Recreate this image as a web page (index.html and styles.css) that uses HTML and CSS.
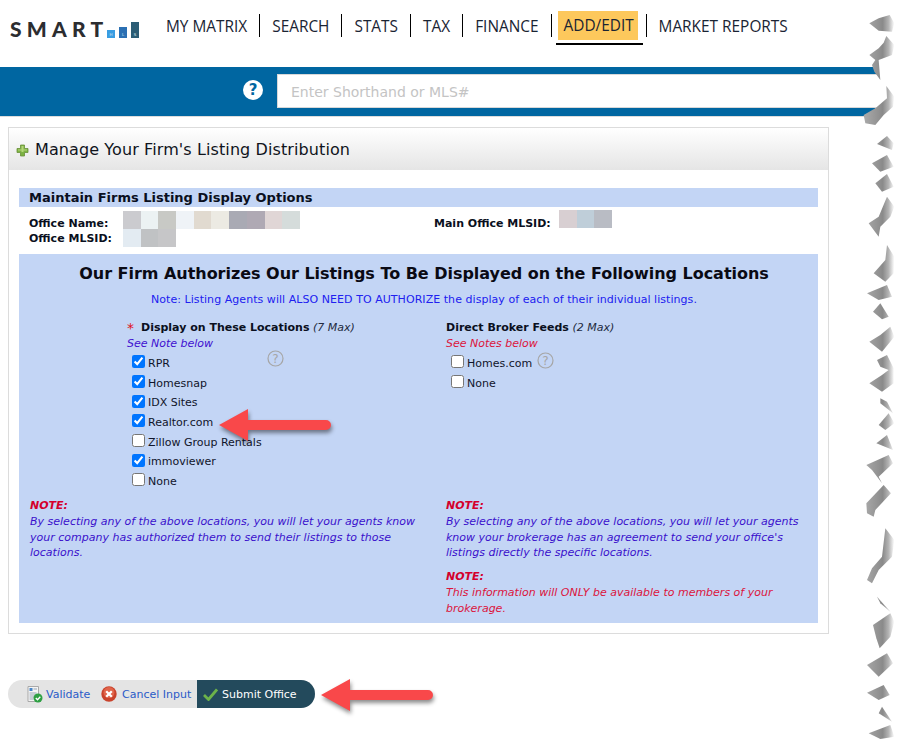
FILE: index.html
```html
<!DOCTYPE html>
<html lang="en">
<head>
<meta charset="utf-8">
<title>Manage Your Firm's Listing Distribution</title>
<link rel="stylesheet" href="styles.css">
</head>
<body>
<header class="topbar">
  <div class="logo">
    <span class="logo-word">SMART</span>
    <span class="logo-bars">
      <span class="bar bar-h">H</span>
      <span class="bar bar-l">L</span>
      <span class="bar bar-s">S</span>
    </span>
  </div>
  <nav class="nav">
    <a class="nav-item">MY MATRIX</a>
    <a class="nav-item">SEARCH</a>
    <a class="nav-item">STATS</a>
    <a class="nav-item">TAX</a>
    <a class="nav-item">FINANCE</a>
    <a class="nav-item nav-active"><span class="nav-hl">ADD/EDIT</span></a>
    <a class="nav-item nav-last">MARKET REPORTS</a>
  </nav>
</header>

<div class="searchband">
  <svg class="help-white" width="20" height="20" viewBox="0 0 20 20"><circle cx="10" cy="10" r="10" fill="#fff"/><text x="10" y="15.2" text-anchor="middle" class="help-white-q">?</text></svg>
  <div class="searchbox">Enter Shorthand or MLS#</div>
</div>

<main class="panel">
  <div class="panel-head">
    <svg class="plus" width="13" height="13" viewBox="0 0 13 13"><path d="M4.5 1h4v3.5H12v4H8.500V12h-4V8.500H1v-4h3.500z" fill="#7cb342" stroke="#6a8f3a" stroke-width=".8"/><path d="M5.500 2h2v3.500H11v1H7.500V8h-2V6.500H2v-1h3.500z" fill="#b5d67a"/></svg>
    <h1 class="panel-title">Manage Your Firm's Listing Distribution</h1>
  </div>
  <div class="panel-body">
    <h2 class="subhead">Maintain Firms Listing Display Options</h2>
    <div class="office">
      <div class="office-col">
        <div class="office-row"><b class="office-label label-low">Office Name:</b>
          <span class="blur"><i class="px a1"></i><i class="px a2"></i><i class="px a3"></i><i class="px a4"></i><i class="px a5"></i><i class="px a6"></i><i class="px a7"></i><i class="px a8"></i><i class="px a9"></i><i class="px a10"></i></span></div>
        <div class="office-row"><b class="office-label">Office MLSID:</b>
          <span class="blur"><i class="px b1"></i><i class="px b2"></i><i class="px b3"></i></span></div>
      </div>
      <div class="office-col2">
        <div class="office-row"><b class="office-label2">Main Office MLSID:</b>
          <span class="blur"><i class="px c1"></i><i class="px c2"></i><i class="px c3"></i></span></div>
      </div>
    </div>

    <section class="bluebox">
      <h2 class="auth-title">Our Firm Authorizes Our Listings To Be Displayed on the Following Locations</h2>
      <p class="auth-note">Note: Listing Agents will ALSO NEED TO AUTHORIZE the display of each of their individual listings.</p>
      <div class="cols">
        <div class="col-left">
          <div class="col-head"><span class="star">*</span><b>Display on These Locations</b> <em>(7 Max)</em></div>
          <div class="see see-blue">See Note below</div>
          <label class="check"><input type="checkbox" checked>RPR<svg class="help help-a" width="17" height="17" viewBox="0 0 17 17"><circle cx="8.500" cy="8.500" r="7.500" fill="none" stroke="#a6a6a6" stroke-width="1.200"/><text x="8.500" y="12.500" text-anchor="middle" class="help-q">?</text></svg></label>
          <label class="check"><input type="checkbox" checked>Homesnap</label>
          <label class="check"><input type="checkbox" checked>IDX Sites</label>
          <label class="check"><input type="checkbox" checked>Realtor.com</label>
          <label class="check"><input type="checkbox">Zillow Group Rentals</label>
          <label class="check"><input type="checkbox" checked>immoviewer</label>
          <label class="check"><input type="checkbox">None</label>
        </div>
        <div class="col-right">
          <div class="col-head"><b>Direct Broker Feeds</b> <em>(2 Max)</em></div>
          <div class="see see-red">See Notes below</div>
          <label class="check"><input type="checkbox">Homes.com<svg class="help help-b" width="17" height="17" viewBox="0 0 17 17"><circle cx="8.500" cy="8.500" r="7.500" fill="none" stroke="#a6a6a6" stroke-width="1.200"/><text x="8.500" y="12.500" text-anchor="middle" class="help-q">?</text></svg></label>
          <label class="check"><input type="checkbox">None</label>
        </div>
      </div>
      <div class="notes">
        <div class="note-left">
          <div class="note-label">NOTE:</div>
          <p class="note-text">By selecting any of the above locations, you will let your agents know your company has authorized them to send their listings to those locations.</p>
        </div>
        <div class="note-right">
          <div class="note-label">NOTE:</div>
          <p class="note-text">By selecting any of the above locations, you will let your agents know your brokerage has an agreement to send your office's listings directly the specific locations.</p>
          <div class="note-label note-gap">NOTE:</div>
          <p class="note-text note-red">This information will ONLY be available to members of your brokerage.</p>
        </div>
      </div>
    </section>
  </div>
</main>

<div class="actions">
  <a class="act act-validate">
    <svg width="16" height="17" viewBox="0 0 16 17"><path d="M1 .5h10.500v15H1z" fill="#f4f4f4" stroke="#a9a9a9"/><rect x="2.500" y="2" width="3" height="3" fill="#4a86c8"/><path d="M6.500 3h3.500M2.500 7h7M2.500 9h6M2.500 11h5M2.500 13h4" stroke="#9aa7b5"/><circle cx="11" cy="12" r="4.500" fill="#2ea043"/><path d="M8.800 12l1.700 1.700 2.800-3" fill="none" stroke="#fff" stroke-width="1.300"/></svg>
    <span>Validate</span>
  </a>
  <a class="act act-cancel">
    <svg width="16" height="16" viewBox="0 0 16 16"><circle cx="8" cy="8" r="7.700" fill="#c9432c"/><circle cx="8" cy="6.500" r="5.500" fill="#e0644a"/><path d="M5.200 5.200l5.600 5.600M10.800 5.200l-5.600 5.600" stroke="#fff" stroke-width="2.300"/></svg>
    <span>Cancel Input</span>
  </a>
  <a class="act-submit">
    <svg width="15" height="13" viewBox="0 0 15 13"><path d="M1 7l4.500 4.500L14 1.500" fill="none" stroke="#6cb34a" stroke-width="2.800"/></svg>
    <span>Submit Office</span>
  </a>
</div>

<svg class="arrow arrow-one" width="122" height="44" viewBox="0 0 122 44"><path d="M3 19L32 3v11h78a5 5 0 0 1 0 10H32v11z" fill="#f9484a"/></svg>
<svg class="arrow arrow-two" width="122" height="44" viewBox="0 0 122 44"><path d="M3 19L32 3v11h78a5 5 0 0 1 0 10H32v11z" fill="#f9484a"/></svg>

<svg class="torn" width="60" height="743" viewBox="0 0 180 2229" aria-hidden="true">
  <defs>
    <linearGradient id="shade" gradientUnits="userSpaceOnUse" x1="85" x2="172" y1="0" y2="0">
      <stop offset="0" stop-color="#a8a8a8"/>
      <stop offset=".6" stop-color="#8a8a8a"/>
      <stop offset=".8" stop-color="#b4b4b4"/>
      <stop offset="1" stop-color="#ffffff"/>
    </linearGradient>
    <filter id="soft" x="-20%" y="-20%" width="140%" height="140%"><feGaussianBlur stdDeviation="1.500"/></filter>
  </defs>
  <path d="M105 190L125 235 150 258 165 290 115 325 85 372H180V190z" fill="#fff"/>
  <g fill="url(#shade)" filter="url(#soft)">
    <path d="M97 70L125 55 158 45 172 70 165 95 125 92z"/>
    <path d="M148 108L172 135 165 165 125 180 130 240 112 215 105 195 115 180 97 165 125 145 140 128z"/>
    <path d="M148 258L172 290 168 320 140 345 115 375 85 370 80 345 115 325 150 295z"/>
    <path d="M150 408L170 430 165 450 120 432z"/>
    <path d="M105 490L150 465 170 500 130 515z"/>
    <path d="M115 550L150 522 170 560 135 575z"/>
    <path d="M150 590L172 620 160 650 130 680 125 710 95 670 125 650z"/>
    <path d="M150 735L172 770 170 820 145 845 110 820 145 780z"/>
    <path d="M90 880L150 855 165 890 125 900z"/>
    <path d="M108 935L130 910 155 950 135 958z"/>
    <path d="M160 980L172 1010 135 1055 97 1025 130 1005z"/>
    <path d="M150 1065L170 1105 170 1150 135 1175 97 1150 135 1125 155 1110 130 1100 120 1080z"/>
    <path d="M130 1195L150 1205 168 1240 130 1210z"/>
    <path d="M125 1275L155 1240 172 1270 145 1290z"/>
    <path d="M118 1330L150 1305 168 1350z"/>
    <path d="M88 1395L155 1365 168 1390 125 1430 135 1450 105 1410z"/>
    <path d="M140 1455L162 1480 115 1530 110 1550 90 1540 88 1510z"/>
    <path d="M145 1585L172 1620 165 1670 125 1710 105 1750 90 1740 105 1705 135 1670z"/>
    <path d="M120 1790L160 1835 130 1810z"/>
    <path d="M108 1875L160 1840 172 1865 160 1910 128 1945 118 1915z"/>
    <path d="M90 1995L150 1960 168 1990 125 2030z"/>
    <path d="M90 2078L140 2055 158 2085 125 2100z"/>
    <path d="M125 2140L135 2120 165 2165z"/>
    <path d="M95 2200L160 2175 172 2210 130 2217z"/>
  </g>
</svg>
</body>
</html>
```
FILE: styles.css
```css
* { box-sizing: border-box; }
html, body { margin: 0; padding: 0; background: #fff; }
body {
  position: relative;
  width: 897px;
  height: 743px;
  overflow: hidden;
  font-family: "DejaVu Sans", Verdana, sans-serif;
  font-size: 11px;
  color: #000;
}

/* top bar */
.topbar { display: flex; height: 67px; padding-left: 10px; }
.logo { display: flex; align-items: flex-end; width: 144px; height: 38px; }
.logo-word {
  flex: none;
  width: 97px;
  font-family: Lato, "Liberation Sans", sans-serif;
  font-weight: 900;
  font-size: 21px;
  line-height: 18px;
  letter-spacing: 5.200px;
  color: #2c2d30;
  white-space: nowrap;
}
.logo-bars { display: flex; align-items: flex-end; gap: 4px; }
.bar {
  width: 8px;
  color: #dbe9f2;
  font-size: 4px;
  line-height: 7px;
  text-align: center;
  display: flex;
  align-items: flex-end;
  justify-content: center;
}
.bar-h { height: 8px; background: #3a9de2; }
.bar-l { height: 11px; background: #2b70b3; }
.bar-s { height: 16px; background: #2c5d75; }

.nav { display: flex; align-items: flex-start; padding-top: 14px; font-family: "Open Sans", sans-serif; font-size: 15.400px; }
.nav-item {
  display: block;
  height: 23px;
  line-height: 25px;
  padding: 0 12px;
  border-right: 1px solid #000;
  color: #1a2433;
  white-space: nowrap;
}
.nav-active { position: relative; padding: 0 8px 0 6px; }
.nav-hl {
  display: block;
  margin-top: -3px;
  height: 29px;
  line-height: 30px;
  padding: 0 0 0 6px;
  width: 80px;
  background: #fdc85c;
}
.nav-active::after {
  content: "";
  position: absolute;
  left: 4px;
  right: 3px;
  top: 29px;
  height: 2px;
  background: #000;
}
.nav-last { border-right: 0; }

/* search band */
.searchband {
  display: flex;
  align-items: center;
  height: 50px;
  padding-left: 243px;
  background: #0066a1;
  border-bottom: 1px solid #dcdcdc;
}
.help-white { margin-right: 14px; margin-top: -4px; }
.help-white-q { font: 700 15px "DejaVu Sans", sans-serif; fill: #0066a1; }
.searchbox {
  width: 620px;
  height: 34px;
  margin-top: -1px;
  padding-left: 13px;
  line-height: 34px;
  font-size: 14px;
  color: #c4c4c4;
  background: #fff;
  border: 1px solid #d8d8d8;
}

/* panel */
.panel {
  width: 821px;
  height: 507px;
  margin: 10px 0 0 8px;
  border: 1px solid #dcdcdc;
}
.panel-head {
  display: flex;
  align-items: center;
  height: 42px;
  padding-left: 7px;
  background: linear-gradient(#fff, #e5e5e5);
}
.plus { margin-right: 6px; margin-top: 2px; }
.panel-title { margin: 0; font-weight: 400; font-size: 16px; letter-spacing: .1px; color: #10141c; }
.panel-body { padding: 18px 10px 0; }
.subhead {
  margin: 0;
  height: 19px;
  line-height: 19px;
  padding-left: 10px;
  font-size: 13px;
  font-weight: 700;
  background: #c3d5f5;
  color: #0a0f20;
}

.office { display: flex; height: 47px; padding-left: 10px; }
.office-col { width: 405px; padding-top: 4px; }
.office-col2 { padding-top: 3px; }
.office-row { display: flex; height: 18px; line-height: 18px; color: #0a0f20; }
.office-label { width: 94px; font-size: 11px; padding-top: 1px; }
.office-label2 { width: 125px; font-size: 11px; padding-top: 5px; }
.label-low { padding-top: 4px; }
.blur { display: flex; }
.px { display: block; width: 17.700px; height: 18px; }
.a1 { background: #cbcbcf; } .a2 { background: #ecf2f3; } .a3 { background: #c8c9c5; }
.a4 { background: #eff3f7; } .a5 { background: #e1dad0; } .a6 { background: #eceae3; }
.a7 { background: #a9aab4; } .a8 { background: #afa9b4; } .a9 { background: #e0d6d6; }
.a10 { background: #d5dcdb; }
.b1 { background: #e3ebf2; } .b2 { background: #c0c2c4; } .b3 { background: #c6c6c8; }
.c1 { background: #d8cfd2; } .c2 { background: #bfced9; } .c3 { background: #b9bcc4; }

/* blue box */
.bluebox { height: 369px; background: #c3d5f5; }
.auth-title {
  margin: 0;
  padding: 10px 0 0 11px;
  text-align: center;
  font-size: 16px;
  line-height: 19px;
  font-weight: 700;
  letter-spacing: -.03px;
  color: #0a0a14;
}
.auth-note {
  margin: 10px 0 0;
  padding-left: 11px;
  text-align: center;
  line-height: 14px;
  letter-spacing: .05px;
  color: #2020f0;
}
.cols { display: flex; padding: 11px 0 0 108px; height: 191px; }
.col-left { width: 319px; }
.col-head { height: 17px; line-height: 19px; color: #0a0f20; }
.col-head em { font-style: italic; color: #222a40; }
.star { color: #e01020; font-size: 14px; margin-right: 7px; line-height: 10px; vertical-align: -2px; }
.see { height: 18.500px; line-height: 17px; font-style: italic; }
.see-blue { color: #4010d0; }
.see-red { color: #dc143c; }
.check { position: relative; display: flex; align-items: center; height: 19.700px; padding-left: 5px; color: #10142a; }
.check input { width: 13px; height: 13px; margin: -3px 3px 0 0; flex: none; }
.help { position: absolute; }
.help-a { left: 140px; top: -4px; }
.help-b { left: 91px; top: -2px; }
.help-q { font: 400 12px "DejaVu Sans", sans-serif; fill: #a6a6a6; }

.notes { display: flex; padding-left: 11px; }
.note-left { width: 416px; padding-right: 10px; }
.note-right { width: 355px; }
.note-label { font-weight: 700; font-style: italic; color: #d4002c; line-height: 16px; height: 16px; }
.note-text { margin: 0; font-style: italic; line-height: 15.700px; color: #3a10cc; }
.note-gap { margin-top: 8px; }
.note-red { color: #dc143c; }

/* action bar */
.actions {
  display: flex;
  align-items: center;
  width: 307px;
  height: 28px;
  margin: 46px 0 0 8px;
  padding-left: 19px;
  background: #e4e4e4;
  border-radius: 14px;
  overflow: hidden;
  color: #2a5bc8;
}
.act { display: flex; align-items: center; gap: 3px; }
.act-validate { width: 74px; }
.act-cancel { width: 96px; gap: 5px; }
.act-submit {
  display: flex;
  align-items: center;
  gap: 4px;
  width: 118px;
  height: 28px;
  padding-left: 6px;
  background: #234a5c;
  color: #fff;
}

/* overlays */
.arrow { position: absolute; filter: drop-shadow(1px 3px 2px rgba(0, 0, 0, .45)); }
.arrow-one { left: 216px; top: 406px; }
.arrow-two { left: 318px; top: 676px; }
.torn { position: absolute; left: 837px; top: 0; }
```
